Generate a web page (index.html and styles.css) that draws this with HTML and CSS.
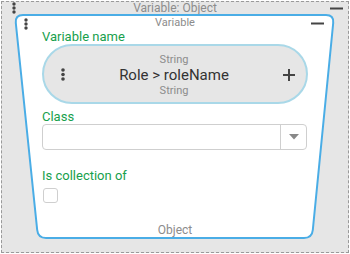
FILE: index.html
```html
<!DOCTYPE html>
<html lang="en">
<head>
<meta charset="utf-8">
<title>Variable: Object</title>
<link rel="stylesheet" href="styles.css">
</head>
<body>

<!-- ======= NODE ======= -->
<div class="node">
  <div class="head node-head">
    <span class="head-side"><svg class="dots" width="4" height="12" viewBox="0 0 4 12"><circle cx="2" cy="2" r="1.7"/><circle cx="2" cy="6" r="1.7"/><circle cx="2" cy="10" r="1.7"/></svg></span>
    <span class="head-title">Variable: Object</span>
    <span class="head-side side-right"><svg class="minus" width="13" height="3" viewBox="0 0 13 3"><rect y="0.5" width="13" height="2"/></svg></span>
  </div>

  <!-- -------- CARD -------- -->
  <div class="card">
    <svg class="card-shape" width="322" height="226" viewBox="0 0 322 226">
      <path d="M9,1 H312 Q320,1 319.2,9 L298.8,216 Q298,224 290,224 H32 Q24,224 23.2,216 L1.8,9 Q1,1 9,1 Z"/>
    </svg>

    <div class="head card-head">
      <span class="head-side"><svg class="dots" width="4" height="12" viewBox="0 0 4 12"><circle cx="2" cy="2" r="1.7"/><circle cx="2" cy="6" r="1.7"/><circle cx="2" cy="10" r="1.7"/></svg></span>
      <span class="head-title">Variable</span>
      <span class="head-side side-right"><svg class="minus" width="13" height="3" viewBox="0 0 13 3"><rect y="0.5" width="13" height="2"/></svg></span>
    </div>

    <div class="card-body">
      <label class="field-label">Variable name</label>
      <div class="pill">
        <svg class="dots" width="4" height="13" viewBox="0 0 4 13"><circle cx="2" cy="2" r="1.8"/><circle cx="2" cy="6.5" r="1.8"/><circle cx="2" cy="11" r="1.8"/></svg>
        <div class="pill-text">
          <div class="pill-type">String</div>
          <div class="pill-name">Role &gt; roleName</div>
          <div class="pill-type">String</div>
        </div>
        <svg class="plus" width="12" height="12" viewBox="0 0 12 12"><path d="M6 0V12M0 6H12"/></svg>
      </div>

      <label class="field-label label-class">Class</label>
      <div class="select">
        <div class="select-value"></div>
        <div class="select-arrow">
          <svg width="10" height="6" viewBox="0 0 10 6"><path d="M0 0H10L5 5.5Z"/></svg>
        </div>
      </div>

      <label class="field-label label-coll">Is collection of</label>
      <div class="checkbox"></div>
    </div>

    <div class="card-foot">Object</div>
  </div>
</div>

</body>
</html>
```

FILE: styles.css
```css
/* ---------- BASE ---------- */
:root{
  --bg:#e6e6e6;
  --blue:#4aade6;
  --pill-border:#a9d8e8;
  --green:#17a04c;
  --muted:#8c8c8c;
  --icon:#444;
  --line:#cfcfcf;
}
*{margin:0;padding:0;box-sizing:border-box;font-family:Roboto,"Liberation Sans",Arial,sans-serif;}
body{background:#fff;}
.dots{display:block;fill:var(--icon);}
.minus{display:block;fill:var(--icon);}

/* ---------- HEADERS ---------- */
.head{display:flex;align-items:center;}
.head-side{width:40px;display:flex;align-items:center;}
.side-right{justify-content:flex-end;}
.head-title{flex:1;text-align:center;color:var(--muted);}

.node-head{height:12px;}
.node-head .head-side{padding-left:10px;}
.node-head .side-right{padding:0 5px 0 0;}
.node-head .head-title{font-size:12px;line-height:12px;}

.card-head{height:14px;margin-top:2px;}
.card-head .head-side{padding-left:10px;}
.card-head .side-right{padding:0 12px 0 0;}
.card-head .dots{margin-top:2px;}
.card-head .head-title{font-size:11px;line-height:14px;}

/* ---------- NODE ---------- */
.node{margin:1px;width:348px;height:252px;border:1px dashed #9a9a9a;background:var(--bg);}

/* ---------- CARD ---------- */
.card{position:relative;margin-left:12px;width:322px;height:226px;display:flex;flex-direction:column;}
.card-shape{position:absolute;left:0;top:0;}
.card-shape path{fill:#fff;stroke:var(--blue);stroke-width:2;}
.card-head,.card-body,.card-foot{position:relative;}
.card-body{padding-left:28px;display:flex;flex-direction:column;align-items:flex-start;}
.field-label{display:block;font-size:13px;line-height:14px;color:var(--green);}
.label-class{margin-top:6px;}
.label-coll{margin-top:19px;}

/* ---------- PILL ---------- */
.pill{width:266px;height:60px;border:2px solid var(--pill-border);border-radius:30px;background:var(--bg);
      display:flex;align-items:center;padding:0 11px 0 17px;}
.pill .dots{margin-top:1px;}
.pill-text{flex:1;text-align:center;padding-top:1px;}
.pill-type{font-size:11px;line-height:13px;color:var(--muted);}
.pill-name{font-size:15px;line-height:18px;color:#333;}
.plus{display:block;stroke:var(--icon);stroke-width:2;margin-top:1px;}

/* ---------- SELECT ---------- */
.select{margin-top:0;width:265px;height:26px;border:1px solid var(--line);border-radius:4px;background:#fff;display:flex;}
.select-value{flex:1;}
.select-arrow{width:26px;border-left:1px solid var(--line);display:flex;align-items:center;justify-content:center;}
.select-arrow svg{display:block;fill:#888;margin-left:1px;}

/* ---------- CHECKBOX ---------- */
.checkbox{margin-top:5px;margin-left:1px;width:15px;height:15px;border:1px solid var(--line);border-radius:3px;background:#fff;}

.card-foot{margin-top:auto;margin-bottom:3px;font-size:12px;line-height:14px;color:var(--muted);text-align:center;}
```
